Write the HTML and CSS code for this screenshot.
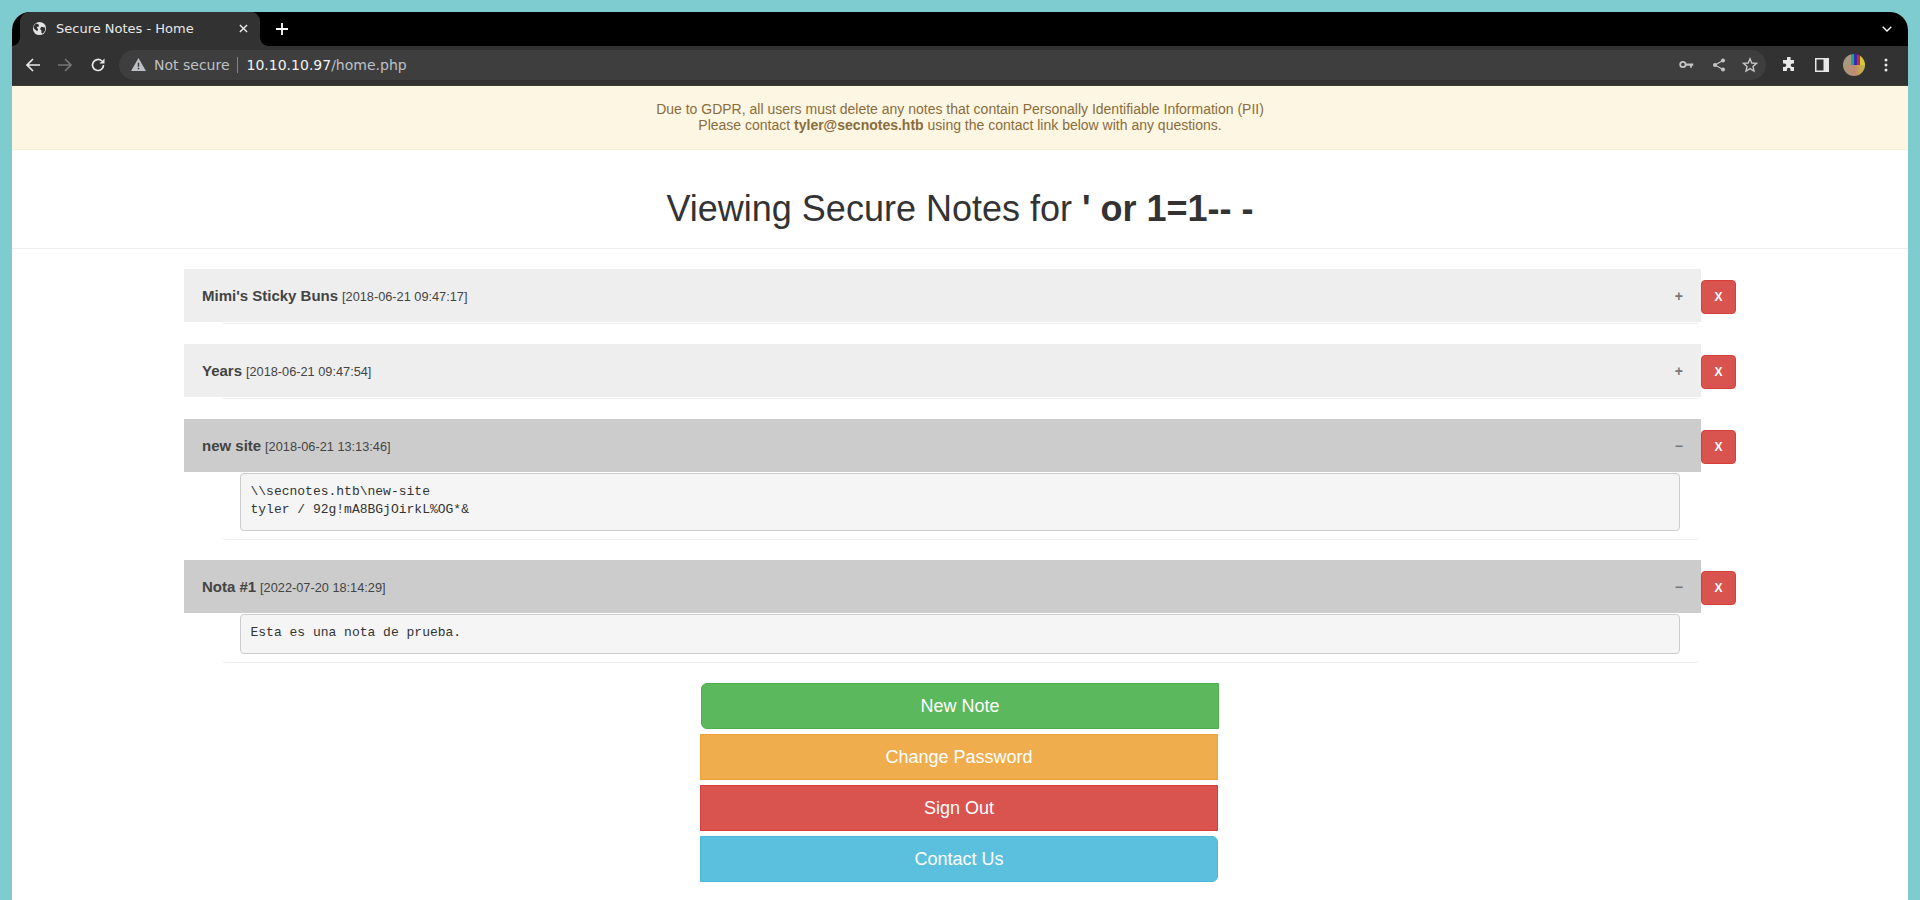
FILE: index.html
```html
<!DOCTYPE html>
<html lang="en">
<head>
<meta charset="utf-8">
<title>Secure Notes - Home</title>
<link rel="stylesheet" href="styles.css">
</head>
<body>
<div class="window">
  <div class="tabstrip">
    <div class="tab">
      <svg class="favicon" viewBox="0 0 16 16"><circle cx="8" cy="8" r="7" fill="#e3e3e3"/><path d="M4 2.500 7.500 4 7 6 5 6.500 6.500 9 5.500 11 2.500 8.500 1.500 6ZM10 6 14 7 14 10 11.500 13.500 10 12.500 10 10 8.500 8.500Z" fill="#323232"/></svg>
      <span class="tab-title">Secure Notes - Home</span>
      <svg class="tab-close" viewBox="0 0 10 10"><path d="M1 1 9 9M9 1 1 9" stroke="#e8e8e8" stroke-width="1.600"/></svg>
    </div>
    <svg class="newtab" viewBox="0 0 12 12"><path d="M6 0V12M0 6H12" stroke="#fff" stroke-width="1.800"/></svg>
    <svg class="tabmenu" viewBox="0 0 10 6"><path d="M.7.700 5 5 9.300.700" fill="none" stroke="#fff" stroke-width="1.400"/></svg>
  </div>
  <div class="toolbar">
    <svg class="nav" viewBox="0 0 16 16"><path d="M15 8H2M8 2 2 8l6 6" fill="none" stroke="#e8e8e8" stroke-width="1.700"/></svg>
    <svg class="nav" viewBox="0 0 16 16"><path d="M1 8H14M8 2l6 6-6 6" fill="none" stroke="#757575" stroke-width="1.700"/></svg>
    <svg class="nav" viewBox="0 0 16 16"><path d="M13.500 8A5.500 5.500 0 1 1 11.800 4" fill="none" stroke="#e8e8e8" stroke-width="1.700"/><path d="M14.500 1.500V6.500H9.500Z" fill="#e8e8e8"/></svg>
    <div class="omnibox">
      <svg class="warn" viewBox="0 0 16 14"><path d="M8 0 16 14H0Z" fill="#bdc1c6"/><path d="M7.200 5H8.800V9.500H7.200ZM7.200 10.500H8.800V12H7.200Z" fill="#3c3c3c"/></svg>
      <span class="not-secure">Not secure</span>
      <span class="sep"></span>
      <span class="url"><span class="host">10.10.10.97</span>/home.php</span>
      <svg class="omni-icon key" viewBox="0 0 16 10"><circle cx="4" cy="5" r="3" fill="none" stroke="#c4c4c4" stroke-width="2"/><path d="M7 4H15.500V6.500H14V8.500H12V6.500H7Z" fill="#c4c4c4"/></svg>
      <svg class="omni-icon" viewBox="0 0 14 14"><path d="M11 2.500 3 7l8 4.500" fill="none" stroke="#c4c4c4" stroke-width="1.300"/><circle cx="11" cy="2.500" r="2" fill="#c4c4c4"/><circle cx="3" cy="7" r="2" fill="#c4c4c4"/><circle cx="11" cy="11.500" r="2" fill="#c4c4c4"/></svg>
      <svg class="omni-icon" viewBox="0 0 16 16"><path d="M8 1.800 9.800 6 14.500 6.400 11 9.400 12 14 8 11.600 4 14 5 9.400 1.500 6.400 6.200 6Z" fill="none" stroke="#c4c4c4" stroke-width="1.400"/></svg>
    </div>
    <svg class="ext" viewBox="0 0 16 16"><path d="M6 1.500a1.800 1.800 0 0 1 3.600 0V3.500H13V7h-1.500a1.800 1.800 0 0 0 0 3.600H13V14.500H9.500V13a1.800 1.800 0 0 0-3.600 0v1.500H2V10.500H3.500a1.800 1.800 0 0 0 0-3.600H2V3.500H6Z" fill="#e8e8e8" transform="translate(0 -.5)"/></svg>
    <svg class="side" viewBox="0 0 14 14"><path d="M0 0H14V14H0ZM1.500 1.500V12.500H8.500V1.500Z" fill="#e8e8e8" fill-rule="evenodd"/></svg>
    <span class="avatar"></span>
    <svg class="kebab" viewBox="0 0 4 14"><circle cx="2" cy="2" r="1.500" fill="#e8e8e8"/><circle cx="2" cy="7" r="1.500" fill="#e8e8e8"/><circle cx="2" cy="12" r="1.500" fill="#e8e8e8"/></svg>
  </div>
  <main class="page">
    <div class="alert">Due to GDPR, all users must delete any notes that contain Personally Identifiable Information (PII)<br>Please contact <strong>tyler@secnotes.htb</strong> using the contact link below with any questions.</div>
    <h1 class="heading">Viewing Secure Notes for <strong>' or 1=1-- -</strong></h1>
    <section class="notes">
      <article class="note">
        <div class="note-main">
          <div class="note-head"><span><strong class="note-title">Mimi's Sticky Buns</strong> <small class="note-date">[2018-06-21 09:47:17]</small></span><span class="toggle">+</span></div>
          <div class="note-body"></div>
        </div>
        <button class="del">X</button>
      </article>
      <article class="note">
        <div class="note-main">
          <div class="note-head"><span><strong class="note-title">Years</strong> <small class="note-date">[2018-06-21 09:47:54]</small></span><span class="toggle">+</span></div>
          <div class="note-body"></div>
        </div>
        <button class="del">X</button>
      </article>
      <article class="note">
        <div class="note-main">
          <div class="note-head open"><span><strong class="note-title">new site</strong> <small class="note-date">[2018-06-21 13:13:46]</small></span><span class="toggle">−</span></div>
          <div class="note-body"><pre class="note-text">\\secnotes.htb\new-site
tyler / 92g!mA8BGjOirkL%OG*&amp;</pre></div>
        </div>
        <button class="del">X</button>
      </article>
      <article class="note">
        <div class="note-main">
          <div class="note-head open"><span><strong class="note-title">Nota #1</strong> <small class="note-date">[2022-07-20 18:14:29]</small></span><span class="toggle">−</span></div>
          <div class="note-body"><pre class="note-text">Esta es una nota de prueba.</pre></div>
        </div>
        <button class="del">X</button>
      </article>
    </section>
    <nav class="actions">
      <a class="btn green">New Note</a>
      <a class="btn orange">Change Password</a>
      <a class="btn red">Sign Out</a>
      <a class="btn blue">Contact Us</a>
    </nav>
  </main>
</div>
</body>
</html>
```
FILE: styles.css
```css
* { box-sizing: border-box; }
html, body { margin: 0; height: 900px; overflow: hidden; }
body {
  background: #7ecbd0;
  padding: 12px 12px 0;
  font-family: "Liberation Sans", Arial, sans-serif;
  font-size: 14px;
  color: #333;
}
.window {
  height: 888px;
  background: #fff;
  border-radius: 18px 18px 0 0;
  overflow: hidden;
}
.tabstrip {
  height: 34px;
  background: #000;
  display: flex;
  align-items: center;
  padding-left: 8px;
  padding-right: 16px;
}
.tab {
  position: relative;
  width: 240px;
  height: 34px;
  background: #323232;
  border-radius: 9px 9px 0 0;
  display: flex;
  align-items: center;
  padding: 0 12px 1px 12px;
  font-family: "DejaVu Sans", sans-serif;
  font-size: 13px;
  color: #e8e8e8;
}
.tab::before,
.tab::after {
  content: "";
  position: absolute;
  bottom: 0;
  width: 8px;
  height: 8px;
}
.tab::before {
  right: 100%;
  background: radial-gradient(circle at 0 0, #000 7.500px, #323232 8px);
}
.tab::after {
  left: 100%;
  background: radial-gradient(circle at 100% 0, #000 7.500px, #323232 8px);
}
.favicon { width: 15px; height: 15px; margin-right: 9px; flex: none; }
.tab-title { flex: 1; }
.tab-close { width: 9px; height: 9px; }
.newtab { width: 12px; height: 12px; margin-left: 16px; margin-bottom: 1px; }
.tabmenu { width: 10px; height: 6px; margin-left: auto; margin-bottom: 1px; }
.toolbar {
  height: 40px;
  background: #323232;
  border-bottom: 1px solid #3f3b38;
  display: flex;
  align-items: center;
  padding: 0 0 2px 13px;
}
.nav { width: 16px; height: 16px; margin-right: 16px; flex: none; }
.nav + .nav { margin-right: 17px; }
.nav + .nav + .nav { margin-right: 13px; }
.omnibox {
  width: 1647px;
  height: 30px;
  border-radius: 15px;
  background: #3e3e3e;
  display: flex;
  align-items: center;
  padding: 0 8px 0 12px;
  font-family: "DejaVu Sans", sans-serif;
  color: #bdc1c6;
}
.warn { width: 15px; height: 13px; margin-right: 8px; }
.not-secure { font-size: 14px; }
.sep { width: 1px; height: 16px; background: #80868b; margin: 0 9px 0 7px; }
.url { font-size: 14px; flex: 1; }
.host { color: #f1f3f4; }
.omni-icon { width: 14px; height: 14px; margin-right: 18px; color: #c4c4c4; }
.omni-icon:last-child { margin-right: 0; width: 16px; height: 16px; margin-left: -2px; }
.key { width: 15px; height: 9px; }
.ext { width: 16px; height: 16px; margin-left: 15px; }
.side { width: 14px; height: 14px; margin-left: 18px; }
.avatar {
  width: 22px;
  height: 22px;
  border-radius: 50%;
  margin-left: 14px;
  background:
    linear-gradient(90deg, #a89a80 0 38%, #1fa58a 38% 50%, #3a2ab0 50% 64%, #c02840 64% 76%, #d8c838 76%) top / 100% 50% no-repeat,
    linear-gradient(90deg, #a89a78, #c08a78 55%, #c8a848 80%, #b8c038);
}
.kebab { width: 4px; height: 14px; margin-left: 19px; }
.page { background: #fff; }
.alert {
  height: 64px;
  background: #fdf6e3;
  border-bottom: 1px solid #f5eedb;
  padding-top: 15px;
  text-align: center;
  color: #8a6d3b;
  line-height: 16px;
}
.heading {
  margin: 0;
  height: 99px;
  border-bottom: 1px solid #eee;
  padding-top: 39px;
  font-size: 36px;
  font-weight: 400;
  line-height: 40px;
  text-align: center;
}
.notes { padding: 20px 0 0 172px; }
.note { display: flex; align-items: flex-start; }
.note-main { width: 1517px; margin-bottom: 20px; }
.note-head {
  height: 53px;
  padding: 0 18px;
  background: #eee;
  display: flex;
  align-items: center;
  justify-content: space-between;
  color: #444;
}
.note-head.open { background: #ccc; }
.note-title { font-size: 15px; }
.note-date { font-size: 12.750px; }
.toggle { font-size: 14px; font-weight: 700; color: #777; }
.note-body {
  margin: 0 2px 0 38px;
  padding-top: 1px;
  padding-left: 18px;
  padding-right: 19px;
  border-bottom: 1px solid #eee;
  border-radius: 0 0 4px 4px;
  min-height: 2px;
}
.note-text {
  margin: 0 0 8px;
  padding: 8.500px 9.500px 10.500px;
  border: 1px solid #ccc;
  border-radius: 4px;
  background: #f5f5f5;
  font-family: "Liberation Mono", monospace;
  font-size: 13px;
  line-height: 1.42857;
  color: #333;
}
.del {
  width: 35px;
  height: 34px;
  margin-top: 11px;
  padding: 0;
  border: 1px solid #d43f3a;
  border-radius: 4px;
  background: #d9534f;
  color: #fff;
  font: 700 12px "Liberation Sans", Arial, sans-serif;
}
.actions {
  width: 520px;
  margin: 0.290px auto 0;
  padding-right: 2px;
  display: flex;
  flex-direction: column;
  gap: 5px;
}
.btn {
  height: 46px;
  border: 1px solid;
  padding-top: 2px;
  display: flex;
  align-items: center;
  justify-content: center;
  font-size: 18px;
  color: #fff;
}
.green { background: #5cb85c; border-color: #4cae4c; border-radius: 6px 0 0 6px; margin: 0 -1px 0 1px; }
.orange { background: #f0ad4e; border-color: #eea236; }
.red { background: #d9534f; border-color: #d43f3a; }
.blue { background: #5bc0de; border-color: #46b8da; border-radius: 0 6px 6px 0; }
```
